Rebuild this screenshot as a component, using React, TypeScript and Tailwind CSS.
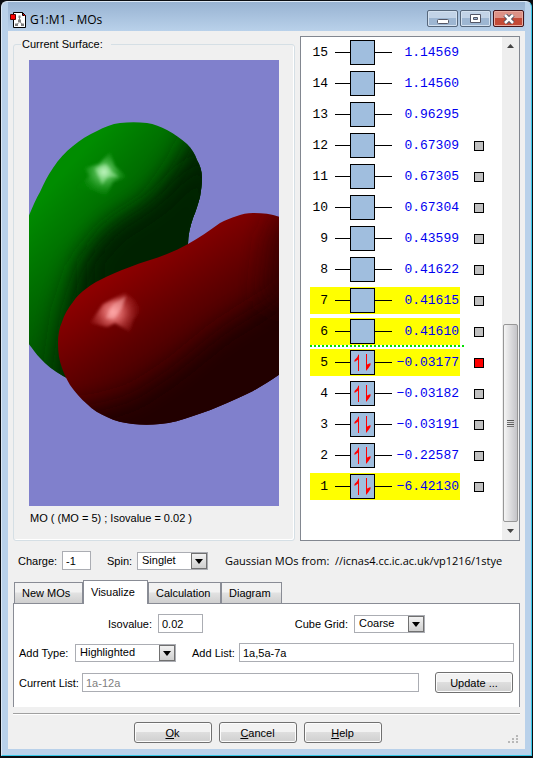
import { clsx } from "clsx";
import React, { useState } from "react";

interface Orbital {
  index: number;
  energy: string;
  occupied?: boolean;
  highlighted?: boolean;
  marker?: "gray" | "red";
}

const orbitals: Orbital[] = [
  { index: 15, energy: "1.14569" },
  { index: 14, energy: "1.14560" },
  { index: 13, energy: "0.96295" },
  { index: 12, energy: "0.67309", marker: "gray" },
  { index: 11, energy: "0.67305", marker: "gray" },
  { index: 10, energy: "0.67304", marker: "gray" },
  { index: 9, energy: "0.43599", marker: "gray" },
  { index: 8, energy: "0.41622", marker: "gray" },
  { index: 7, energy: "0.41615", marker: "gray", highlighted: true },
  { index: 6, energy: "0.41610", marker: "gray", highlighted: true },
  { index: 5, energy: "−0.03177", marker: "red", highlighted: true, occupied: true },
  { index: 4, energy: "−0.03182", marker: "gray", occupied: true },
  { index: 3, energy: "−0.03191", marker: "gray", occupied: true },
  { index: 2, energy: "−0.22587", marker: "gray", occupied: true },
  { index: 1, energy: "−6.42130", marker: "gray", highlighted: true, occupied: true },
];

const LUMO = 6;

const tabs = [
  { name: "New MOs", width: "w-[69px]" },
  { name: "Visualize", width: "w-[65px]" },
  { name: "Calculation", width: "w-[73px]" },
  { name: "Diagram", width: "w-[61px]" },
];

const inputStyle =
  "h-[19px] min-w-0 border border-[#abadb3] bg-white px-[3px] text-[11px] leading-4 outline-none";

const FileIcon = () => (
  <svg width="16" height="16" viewBox="0 0 16 16" className="shrink-0">
    <path d="M3.500 .5h9l3 3v12h-12z" fill="#fff" stroke="#000" />
    <path d="M12.500 .5v3h3z" fill="#fff" stroke="#000" />
    <path d="M13 2l2 2" stroke="#e00" />
    <path d="M9.500 5v5l-3 3M9.500 9l3 4" fill="none" stroke="#888" />
    <path d="M8.500 3.500h2v2.500h-2zM8 7.500h3v2.500h-3zM5 11.500h3v2.500h-3zM11 11.500h3v2.500h-3z" fill="#808080" />
    <path d="M.5 2.500h5v5h-5z" fill="#f00" stroke="#500" />
  </svg>
);

const TitleBar = () => (
  <div className="flex h-[29px] items-start justify-between bg-linear-to-b from-[#98b3d2] to-[#b9d1ea] pr-px pl-[2px]">
    <div className="flex items-center pt-[8px]">
      <FileIcon />
      <h1 className="ml-1 font-['Open_Sans','Noto_Sans',sans-serif] text-[12px] leading-5 text-black">
        G1:M1 - MOs
      </h1>
    </div>

    <div className="flex gap-[2px] pt-[8px]">
      <button
        aria-label="Minimize"
        className="flex h-[17px] w-[31px] items-center justify-center rounded-[2px] border border-[#56677c] bg-linear-to-b from-[#c2d3e7] from-45% to-[#9db6d2] to-50% shadow-[inset_0_0_0_1px_#d3e1f0]"
      >
        <svg width="12" height="12" viewBox="0 0 12 12">
          <rect x=".5" y="6.500" width="11" height="4" rx="1" fill="#fff" stroke="#535666" />
        </svg>
      </button>
      <button
        aria-label="Maximize"
        className="flex h-[17px] w-[31px] items-center justify-center rounded-[2px] border border-[#56677c] bg-linear-to-b from-[#c2d3e7] from-45% to-[#9db6d2] to-50% shadow-[inset_0_0_0_1px_#d3e1f0]"
      >
        <svg width="12" height="12" viewBox="0 0 12 12">
          <path
            d="M.5 1.500h10v8h-10zM3.500 4.500v2h4v-2z"
            fill="#fff"
            fillRule="evenodd"
            stroke="#535666"
          />
        </svg>
      </button>
      <button
        aria-label="Close"
        className="flex h-[17px] w-[31px] items-center justify-center rounded-[2px] border border-[#43141a] bg-linear-to-b from-[#dc9186] from-45% to-[#c34a37] to-50% shadow-[inset_0_0_0_1px_#e8aba0]"
      >
        <svg width="12" height="10" viewBox="0 0 12 10">
          <path d="M2 1l8 8M10 1l-8 8" stroke="#535666" strokeWidth="4.500" />
          <path d="M2 1l8 8M10 1l-8 8" stroke="#fff" strokeWidth="2.500" />
        </svg>
      </button>
    </div>
  </div>
);

const Surface = () => (
  <svg
    viewBox="0 0 250 446"
    preserveAspectRatio="xMidYMid slice"
    className="block h-[446px] w-full bg-[#8080cc]"
    role="img"
    aria-label="Molecular orbital surface"
  >
    <defs>
      <clipPath id="lobe-green">
        <path d="M-1 158C3 148 7 139 11 132C15 123 19 115 24 108C30 99 36 92 44 86C51 80 59 75 68 71C75 67 83 64 91 63C100 62 109 62 118 63C125 64 132 67 138 70C146 74 152 79 158 84C163 89 166 94 168 100C171 105 173 111 173 118C173 124 172 131 171 137C169 144 167 151 164 158C161 167 159 175 159 184L159 240L60 330L34 316C25 311 17 305 11 298C7 294 3 288 -1 283Z" />
      </clipPath>
      <clipPath id="lobe-red">
        <path d="M251 157C243 154 233 153 224 153C218 153 213 154 208 156C202 158 196 160 191 163C180 171 170 178 159 184C152 188 145 191 138 194C126 199 113 202 101 207C90 211 80 215 71 220C66 222 62 225 58 228C52 232 47 237 44 242C39 248 35 255 33 262C30 268 29 276 29 283C29 292 30 300 33 308C35 314 38 320 41 325C46 332 52 339 58 344C64 350 71 354 78 357C86 361 95 363 104 364C113 365 122 365 131 364C142 363 153 360 164 356C176 352 187 348 198 343C207 339 216 335 224 331C233 326 242 320 251 314Z" />
      </clipPath>
      <filter id="soft" x="-50%" y="-50%" width="200%" height="200%">
        <feGaussianBlur stdDeviation="13" />
      </filter>
      <filter id="glint" x="-50%" y="-50%" width="200%" height="200%">
        <feGaussianBlur stdDeviation="1.500" />
      </filter>
      <linearGradient id="green" gradientUnits="userSpaceOnUse" x1="50" y1="95" x2="135" y2="170">
        <stop offset="0" stopColor="#008c00" />
        <stop offset=".45" stopColor="#007000" />
        <stop offset="1" stopColor="#005000" />
      </linearGradient>
      <linearGradient id="red" gradientUnits="userSpaceOnUse" x1="85" y1="215" x2="160" y2="330">
        <stop offset="0" stopColor="#8c0000" />
        <stop offset=".5" stopColor="#5c0000" />
        <stop offset="1" stopColor="#300000" />
      </linearGradient>
      <radialGradient id="green-shine" gradientUnits="userSpaceOnUse" cx="75" cy="112" r="24">
        <stop offset="0" stopColor="#e0ffe0" />
        <stop offset=".3" stopColor="#60c460" stopOpacity=".9" />
        <stop offset="1" stopColor="#109810" stopOpacity=".1" />
      </radialGradient>
      <radialGradient id="red-shine" gradientUnits="userSpaceOnUse" cx="84" cy="252" r="28">
        <stop offset="0" stopColor="#ffa0a0" />
        <stop offset=".35" stopColor="#d86060" stopOpacity=".9" />
        <stop offset="1" stopColor="#a01818" stopOpacity=".1" />
      </radialGradient>
    </defs>

    <g clipPath="url(#lobe-green)">
      <rect width="250" height="446" fill="url(#green)" />
      <path
        d="M172 60L152 100L124 142L78 172L50 206L36 250L24 335L90 380L230 300L230 60Z"
        fill="#002200"
        filter="url(#soft)"
      />
      <path d="M162 110L128 144L84 172L62 200L62 240L170 240L190 100Z" fill="#002200" filter="url(#soft)" />
      <path d="M56 108L70 104L81 92L86 106L98 117L84 122L77 137L66 131L49 128L60 116Z" fill="url(#green-shine)" filter="url(#glint)" />
      <path d="M66 109L77 104L82 111L90 117L78 117L73 125L70 116Z" fill="#a8f0a8" opacity=".5" filter="url(#glint)" />
    </g>

    <g clipPath="url(#lobe-red)">
      <rect width="250" height="446" fill="url(#red)" />
      <path
        d="M290 190L250 236L192 272L146 310L104 338L60 350L20 350L80 400L290 400Z"
        fill="#200000"
        filter="url(#soft)"
      />
      <path d="M265 140L242 175L235 240L290 250L290 130Z" fill="#300000" opacity=".8" filter="url(#soft)" />
      <path d="M61 263L74 244L96 233L106 240L112 249L104 261L101 272L86 263L78 267Z" fill="url(#red-shine)" filter="url(#glint)" />
      <path d="M77 258L84 244L97 236L93 248L85 259Z" fill="#ffb0b0" opacity=".5" filter="url(#glint)" />
    </g>
  </svg>
);

const ElectronPair = () => (
  <svg width="23" height="23" viewBox="0 0 23 23">
    <path d="M7.500 4v16M15.500 3v16" stroke="#f00" fill="none" />
    <path d="M8 3v5L3.500 11V9L6 6.500z" fill="#f00" />
    <path d="M15 20v-6l4.500-2v2L17.500 17z" fill="#f00" />
  </svg>
);

const OrbitalRow = ({ orbital }: { orbital: Orbital }) => {
  const { index, energy, occupied, highlighted, marker } = orbital;

  return (
    <li className="relative flex h-[31px] items-center pl-[9px]">
      <div
        className={clsx(
          "flex h-[27px] w-[150px] items-center",
          highlighted && "bg-[#ffff00]"
        )}
      >
        <span className="w-[18px] text-right text-black">{index}</span>
        <span className="ml-[7px] h-px w-[15px] bg-black" />
        <span className="flex h-[25px] w-[25px] items-center justify-center border border-black bg-[#a0bede]">
          {occupied && <ElectronPair />}
        </span>
        <span className="h-px w-[17px] bg-black" />
        <span className="w-[67px] text-right whitespace-nowrap text-[#0000f0]">{energy}</span>
      </div>
      {marker && (
        <button
          aria-label={`Surface for MO ${index}`}
          className={clsx(
            "ml-[14px] size-[10px] border border-black",
            marker === "red" ? "bg-[#ff0000]" : "bg-[#c0c0c0]"
          )}
        />
      )}
      {index === LUMO && (
        <span className="absolute bottom-0 left-[9px] w-[154px] border-b-2 border-dotted border-[#00e000]" />
      )}
    </li>
  );
};

const ScrollBar = () => (
  <div className="flex w-[17px] flex-col items-center bg-[#eeeeee] pb-px">
    <button aria-label="Scroll up" className="flex h-[17px] w-full items-center justify-center">
      <svg width="7" height="4" viewBox="0 0 7 4">
        <path d="M0 4L3.500 0L7 4z" fill="#444" />
      </svg>
    </button>
    <div className="flex-1" />
    <div className="flex h-[198px] w-[15px] flex-col items-center justify-center gap-px rounded-[2px] border border-[#979797] bg-linear-to-r from-[#f5f5f5] to-[#c4c4c8]">
      <span className="h-px w-[7px] bg-[#555]" />
      <span className="h-px w-[7px] bg-[#777]" />
      <span className="h-px w-[7px] bg-[#555]" />
      <span className="h-px w-[7px] bg-[#777]" />
    </div>
    <button aria-label="Scroll down" className="flex h-[17px] w-full items-center justify-center">
      <svg width="7" height="4" viewBox="0 0 7 4">
        <path d="M0 0L3.500 4L7 0z" fill="#444" />
      </svg>
    </button>
  </div>
);

interface DropdownProps {
  id: string;
  className?: string;
  options: string[];
}

const Dropdown = ({ id, className, options }: DropdownProps) => (
  <div className={clsx("relative h-[18px]", className)}>
    <select
      id={id}
      className="block h-[18px] w-full appearance-none border border-[#abadb3] bg-white pr-[18px] pb-[2px] pl-1 text-[11px] leading-[14px] outline-none"
    >
      {options.map((option) => (
        <option key={option}>{option}</option>
      ))}
    </select>
    <span className="pointer-events-none absolute top-px right-px flex h-4 w-4 items-center justify-center border border-[#707070] bg-linear-to-b from-[#f2f2f2] to-[#cfcfcf] pt-[2px]">
      <svg width="8" height="5" viewBox="0 0 8 5">
        <path d="M0 0h8L4 5z" fill="#000" />
      </svg>
    </span>
  </div>
);

const PushButton = ({ children }: { children: React.ReactNode }) => (
  <button className="h-[21px] w-[78px] rounded-[3px] border border-[#707070] bg-linear-to-b from-[#f2f2f2] from-45% via-[#dedede] via-50% to-[#cfcfcf] text-[11px] leading-4 shadow-[inset_0_0_0_1px_#fcfcfc]">
    {children}
  </button>
);

const App = () => {
  const [activeTab, setActiveTab] = useState("Visualize");

  return (
    <div className="min-h-screen bg-[#0a0d12] p-px font-['Liberation_Sans',Arial,sans-serif] text-[11px] leading-4 text-black">
      <div className="rounded-t-[6px] border border-t-[#dce8f5] border-r-[#35c8e8] border-b-[#35c8e8] border-l-[#dce8f5] bg-[#b9d1ea] px-[6px] pb-[6px]">
        <TitleBar />

        <main className="bg-[#f0f0f0] px-[5px] pt-[5px] pb-[6px]">
          <div className="flex gap-[5px]">
            <fieldset className="min-w-0 flex-1 rounded-[3px] border border-[#d5dfe5] px-[15px] pt-2 shadow-[inset_-1px_-1px_0_#fff]">
              <legend className="-ml-2 h-4 pr-2 pl-px leading-4">Current Surface:</legend>
              <Surface />
              <p className="pt-1 pl-px">MO ( (MO = 5) ; Isovalue = 0.02 )</p>
            </fieldset>

            <section className="flex w-[220px] border border-[#828790] bg-white">
              <ol className="min-w-0 flex-1 pb-[38px] font-['Liberation_Mono',monospace] text-[13px] leading-4">
                {orbitals.map((orbital) => (
                  <OrbitalRow key={orbital.index} orbital={orbital} />
                ))}
              </ol>
              <ScrollBar />
            </section>
          </div>

          <div className="flex h-[39px] items-center px-[5px]">
            <label htmlFor="charge" className="w-[44px]">Charge:</label>
            <input id="charge" defaultValue="-1" className={clsx(inputStyle, "w-[29px]")} />
            <label htmlFor="spin" className="ml-4 w-[30px]">Spin:</label>
            <Dropdown id="spin" className="w-[71px]" options={["Singlet", "Doublet", "Triplet"]} />
            <p className="ml-[17px] min-w-0 flex-1 overflow-hidden font-['Open_Sans','Noto_Sans',sans-serif] text-[11px] whitespace-pre">
              {"Gaussian MOs from:  //icnas4.cc.ic.ac.uk/vp1216/1stye"}
            </p>
          </div>

          <div role="tablist" className="flex items-end pl-px">
            {tabs.map(({ name, width }) => (
              <button
                key={name}
                role="tab"
                aria-selected={activeTab === name}
                onClick={() => setActiveTab(name)}
                className={clsx(
                  "border border-b-0 border-[#898c95] pl-[7px] text-left",
                  width,
                  activeTab === name
                    ? "relative z-10 -mb-px h-6 bg-white pb-[2px]"
                    : "h-[21px] bg-linear-to-b from-[#f2f2f2] from-45% via-[#e2e2e2] via-50% to-[#cfcfcf]"
                )}
              >
                {name}
              </button>
            ))}
          </div>

          <div className="flex flex-col gap-[10px] border border-b-0 border-[#898c95] bg-white px-[5px] pt-[10px] pb-[14px]">
            <div className="flex h-[19px] items-center">
              <label htmlFor="isovalue" className="w-[139px] pr-[6px] text-right">Isovalue:</label>
              <input id="isovalue" defaultValue="0.02" className={clsx(inputStyle, "w-[45px]")} />
              <label htmlFor="cube-grid" className="w-[151px] pr-[6px] text-right">Cube Grid:</label>
              <Dropdown id="cube-grid" className="w-[71px]" options={["Coarse", "Medium", "Fine"]} />
            </div>

            <div className="flex h-[19px] items-center">
              <label htmlFor="add-type" className="w-[56px]">Add Type:</label>
              <Dropdown id="add-type" className="w-[101px]" options={["Highlighted", "Visible", "All"]} />
              <label htmlFor="add-list" className="ml-4 w-[47px]">Add List:</label>
              <input id="add-list" defaultValue="1a,5a-7a" className={clsx(inputStyle, "flex-1")} />
            </div>

            <div className="flex h-[21px] items-center pr-px">
              <label htmlFor="current-list" className="w-[63px] whitespace-nowrap">Current List:</label>
              <input
                id="current-list"
                readOnly
                value="1a-12a"
                className={clsx(inputStyle, "mr-4 flex-1 text-[#808080]")}
              />
              <PushButton>Update ...</PushButton>
            </div>
          </div>

          <div className="mt-[6px] flex items-end border-t border-[#a0a0a0] pt-2 shadow-[inset_0_1px_0_#fff]">
            <div className="flex flex-1 justify-center gap-[7px]">
              <PushButton><u>O</u>k</PushButton>
              <PushButton><u>C</u>ancel</PushButton>
              <PushButton><u>H</u>elp</PushButton>
            </div>
            <svg width="18" height="8" viewBox="0 0 18 8" className="shrink-0">
              <path d="M6 6h2v2H6zM10 6h2v2h-2zM14 6h2v2h-2zM10 3h2v2h-2zM14 3h2v2h-2zM14 0h2v2h-2z" fill="#b8b8b8" />
            </svg>
          </div>
        </main>
      </div>
    </div>
  );
};

export default App;
